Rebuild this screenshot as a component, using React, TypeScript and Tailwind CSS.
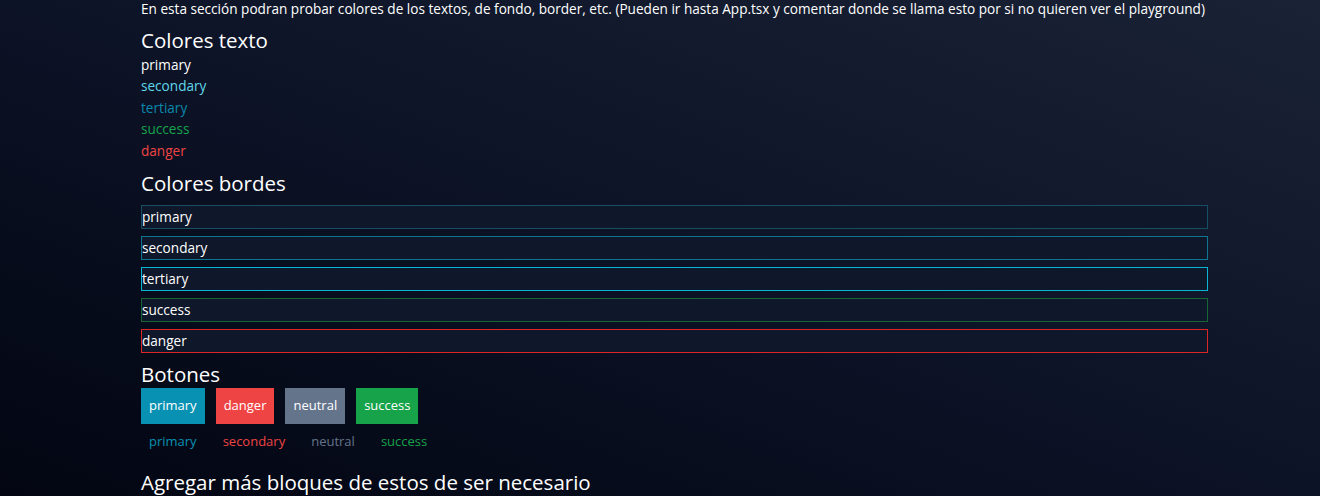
export default function App() {
  const textColors = [
    { name: "primary", cls: "text-white" },
    { name: "secondary", cls: "text-[#5fd8ea]" },
    { name: "tertiary", cls: "text-[#0a88ad]" },
    { name: "success", cls: "text-[#16a34a]" },
    { name: "danger", cls: "text-[#ef4444]" },
  ];

  const borderColors = [
    { name: "primary", cls: "border-[#164e63]" },
    { name: "secondary", cls: "border-[#0e7490]" },
    { name: "tertiary", cls: "border-[#06b6d4]" },
    { name: "success", cls: "border-[#166534]" },
    { name: "danger", cls: "border-[#dc2626]" },
  ];

  const buttons = [
    { name: "primary", cls: "bg-[#0891b2]" },
    { name: "danger", cls: "bg-[#ef4444]" },
    { name: "neutral", cls: "bg-[#64748b]" },
    { name: "success", cls: "bg-[#16a34a]" },
  ];

  const textButtons = [
    { name: "primary", cls: "text-[#0891b2]" },
    { name: "secondary", cls: "text-[#ef4444]" },
    { name: "neutral", cls: "text-[#64748b]" },
    { name: "success", cls: "text-[#16a34a]" },
  ];

  return (
    <div className="h-[496px] w-full overflow-hidden bg-gradient-to-tr from-[#030612] via-[#0d1326] to-[#1a2235] font-['Open_Sans',sans-serif] text-white">
      <div className="ml-[141px] flex w-[1067px] flex-col">
        {/* Intro */}
        <p className="text-[13.6px] leading-[17px] whitespace-nowrap">
          En esta sección podran probar colores de los textos, de fondo, border, etc. (Pueden ir hasta App.tsx y comentar donde se llama esto por si no quieren ver el playground)
        </p>

        {/* Colores texto */}
        <h2 className="mt-[8.5px] text-[20.5px] leading-[28px]">Colores texto</h2>
        <div className="flex flex-col">
          {textColors.map((t) => (
            <span key={t.name} className={`text-[13.6px] leading-[21.5px] ${t.cls}`}>
              {t.name}
            </span>
          ))}
        </div>

        {/* Colores bordes */}
        <h2 className="mt-[7.5px] text-[20.5px] leading-[28px]">Colores bordes</h2>
        <div className="mt-[8.5px] flex flex-col gap-[7px]">
          {borderColors.map((b) => (
            <div key={b.name} className={`border bg-[#0f172a] text-[13.6px] leading-[22px] ${b.cls}`}>
              {b.name}
            </div>
          ))}
        </div>

        {/* Botones */}
        <h2 className="mt-[7px] text-[20.5px] leading-[28px]">Botones</h2>
        <div className="flex gap-[11px]">
          {buttons.map((b) => (
            <button key={b.name} className={`h-[36px] px-2 text-[13px] text-white ${b.cls}`}>
              {b.name}
            </button>
          ))}
        </div>
        <div className="flex gap-[10px]">
          {textButtons.map((b) => (
            <button key={b.name} className={`h-[36px] px-2 text-[13px] ${b.cls}`}>
              {b.name}
            </button>
          ))}
        </div>

        <h2 className="mt-[8px] text-[20.5px] leading-[28px]">Agregar más bloques de estos de ser necesario</h2>
      </div>
    </div>
  );
}
